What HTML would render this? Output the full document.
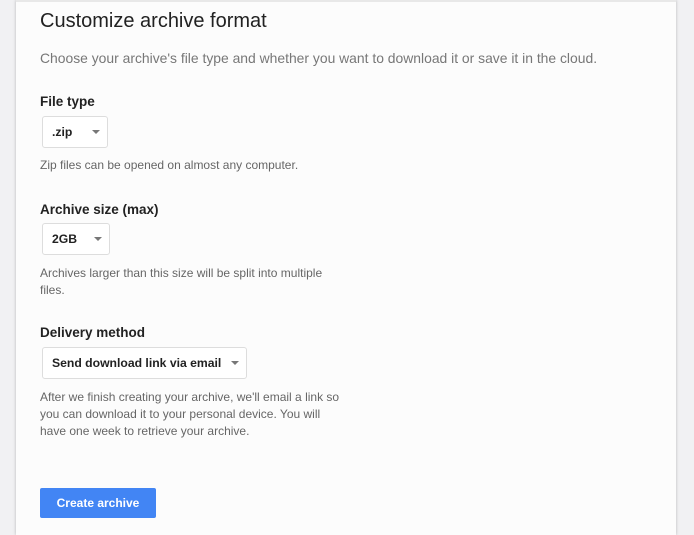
<!DOCTYPE html>
<html><head><style>
*{margin:0;padding:0;box-sizing:border-box}
body{width:694px;height:535px;background:#f1f1f3;font-family:"Liberation Sans",Arial,sans-serif;position:relative;overflow:hidden}
.card{position:absolute;left:16px;top:0;width:660px;height:535px;background:#fcfcfc;box-shadow:0 0 3px rgba(0,0,0,.25)}
.abs{position:absolute;white-space:nowrap}
h1{font-weight:normal;font-size:20px;color:#222;left:24px;top:10px}
.sub{font-size:13.9px;color:#777;left:24px;top:50px}
.lab{font-size:13.5px;font-weight:bold;color:#222}
.sel{position:absolute;border:1px solid #ddd;border-radius:3px;background:#fff;font-size:12.2px;font-weight:bold;color:#222;padding-left:9px;line-height:30px;height:32px}
.sel:after{content:"";position:absolute;right:7px;top:13px;border-left:4px solid transparent;border-right:4px solid transparent;border-top:4px solid #777}
.hint{font-size:12px;color:#666;line-height:17px}
.btn{position:absolute;left:24px;top:488px;width:116px;height:30px;background:#4285f4;border-radius:2px;color:#fff;font-size:12px;font-weight:bold;text-align:center;line-height:30px}
</style></head><body>
<div class="card">
<div class="abs" style="top:0;left:0;width:660px;height:2px;background:#e8e8e8"></div>
<h1 class="abs">Customize archive format</h1>
<div class="abs sub">Choose your archive's file type and whether you want to download it or save it in the cloud.</div>
<div class="abs lab" style="left:24px;top:94px">File type</div>
<div class="sel" style="left:26px;top:116px;width:66px">.zip</div>
<div class="abs hint" style="left:24px;top:157px">Zip files can be opened on almost any computer.</div>
<div class="abs lab" style="left:24px;top:202px">Archive size (max)</div>
<div class="sel" style="left:26px;top:223px;width:68px">2GB</div>
<div class="abs hint" style="left:24px;top:265px">Archives larger than this size will be split into multiple<br>files.</div>
<div class="abs lab" style="left:24px;top:325px">Delivery method</div>
<div class="sel" style="left:26px;top:347px;width:205px">Send download link via email</div>
<div class="abs hint" style="left:24px;top:389px">After we finish creating your archive, we'll email a link so<br>you can download it to your personal device. You will<br>have one week to retrieve your archive.</div>
<div class="btn">Create archive</div>
</div>
</body></html>
